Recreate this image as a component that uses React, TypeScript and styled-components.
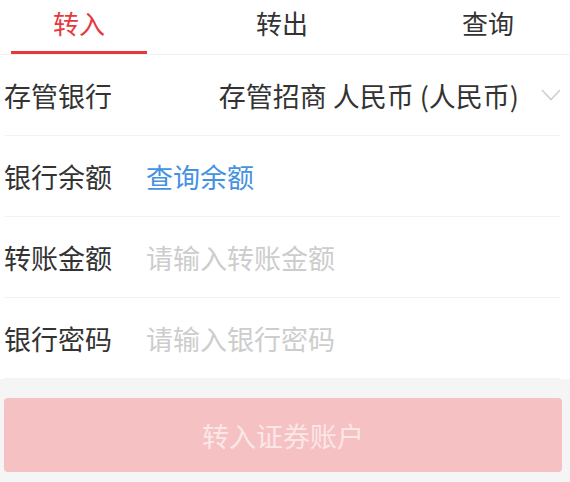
import React, { useState } from "react";
import styled, { createGlobalStyle } from "styled-components";

const tabs = ["转入", "转出", "查询"];

const Chevron = () => (
  <svg width="20" height="12" viewBox="0 0 20 12" fill="none">
    <path d="M1 1 L10 10.5 L19 1" stroke="#cfcfcf" strokeWidth="1.6" />
  </svg>
);

const App = () => {
  const [active, setActive] = useState(0);

  return (
    <>
      <GlobalStyle />
      <Page>
        <TabBar>
          {tabs.map((t, i) => (
            <Tab key={t} $active={i === active} onClick={() => setActive(i)}>
              {t}
              {i === active && <Underline />}
            </Tab>
          ))}
        </TabBar>

        <Row>
          <Label>存管银行</Label>
          <SelectValue>
            <span>存管招商 人民币 (人民币)</span>
            <Chevron />
          </SelectValue>
        </Row>
        <Row>
          <Label>银行余额</Label>
          <Link>查询余额</Link>
        </Row>
        <Row>
          <Label>转账金额</Label>
          <Input placeholder="请输入转账金额" />
        </Row>
        <Row>
          <Label>银行密码</Label>
          <Input type="password" placeholder="请输入银行密码" />
        </Row>

        <Footer>
          <SubmitBtn disabled>转入证券账户</SubmitBtn>
        </Footer>
      </Page>
    </>
  );
};
export default App;

// styled-components -----------------
const GlobalStyle = createGlobalStyle`
  html, body {
    margin: 0;
    padding: 0;
    background: #fff;
  }
  body {
    font-family: "Noto Sans CJK SC", "Noto Sans", sans-serif;
  }
`;

const Page = styled.div`
  width: 570px;
  height: 482px;
  display: flex;
  flex-direction: column;
  background: #fff;
  overflow: hidden;
`;

const TabBar = styled.div`
  height: 54px;
  display: grid;
  grid-template-columns: 158px 248px 1fr;
  border-bottom: 1px solid #f0f0f0;
`;

const Tab = styled.div<{ $active: boolean }>`
  position: relative;
  display: flex;
  justify-content: center;
  align-items: center;
  padding-bottom: 10px;
  font-size: 26px;
  color: ${(p) => (p.$active ? "#e5393d" : "#333")};
  cursor: pointer;
`;

const Underline = styled.div`
  position: absolute;
  bottom: 0;
  left: 11px;
  width: 136px;
  height: 3px;
  background: #e8373b;
`;

const Row = styled.div`
  height: 80px;
  margin: 0 10px 0 4px;
  display: flex;
  align-items: center;
  border-bottom: 1px solid #f3f3f3;
`;

const Label = styled.div`
  width: 142px;
  flex-shrink: 0;
  font-size: 27px;
  color: #333;
`;

const SelectValue = styled.div`
  flex: 1;
  display: flex;
  justify-content: flex-end;
  align-items: center;
  gap: 22px;
  padding-right: 0;
  font-size: 27px;
  color: #333;
  svg {
    margin-right: -1px;
  }
`;

const Link = styled.span`
  font-size: 27px;
  color: #4592e3;
  cursor: pointer;
`;

const Input = styled.input`
  flex: 1;
  border: none;
  outline: none;
  padding: 0;
  background: transparent;
  font-family: inherit;
  font-size: 27px;
  color: #333;
  &::placeholder {
    color: #cdcdcd;
  }
`;

const Footer = styled.div`
  flex: 1;
  background: #f5f5f5;
  padding: 19px 8px 0 4px;
`;

const SubmitBtn = styled.button`
  width: 100%;
  height: 74px;
  border: none;
  border-radius: 4px;
  background: #f6c1c2;
  color: #fbe7e7;
  font-family: inherit;
  font-size: 27px;
  cursor: pointer;
  &:disabled {
    cursor: default;
  }
`;
